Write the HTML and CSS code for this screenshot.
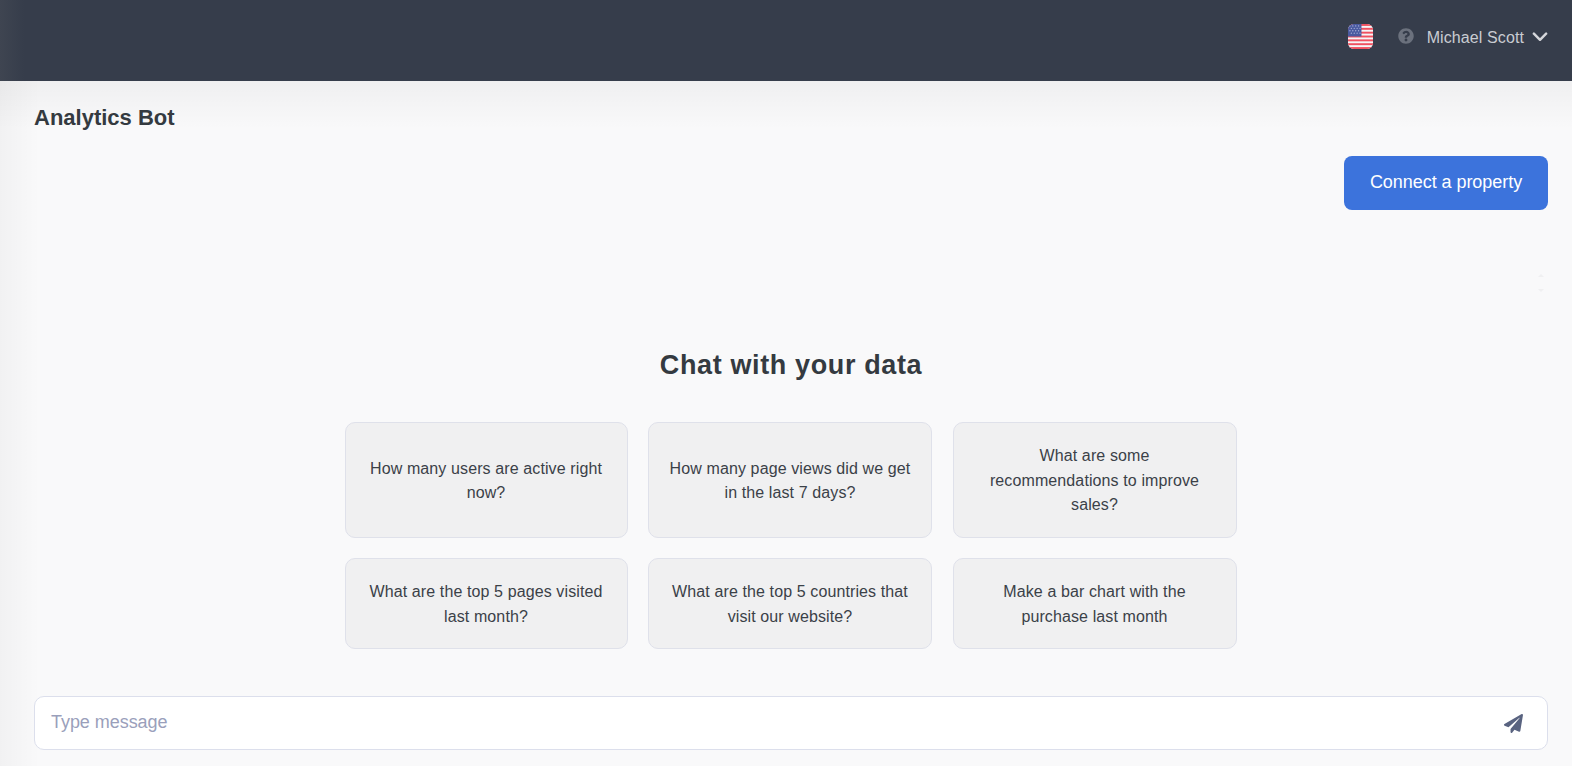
FILE: index.html
```html
<!DOCTYPE html>
<html lang="en">
<head>
<meta charset="utf-8">
<title>Analytics Bot</title>
<link rel="stylesheet" href="styles.css">
</head>
<body>
<header class="topbar">
  <svg class="flag" viewBox="0 0 26 26" aria-hidden="true">
    <defs><clipPath id="flagclip"><rect width="26" height="26" rx="6"/></clipPath></defs>
    <g clip-path="url(#flagclip)">
      <rect width="26" height="26" fill="#f5f5f7"/>
      <rect y="0" width="26" height="2" fill="#f0505f"/>
      <rect y="4" width="26" height="2" fill="#f0505f"/>
      <rect y="8" width="26" height="2" fill="#f0505f"/>
      <rect y="12" width="26" height="2" fill="#f0505f"/>
      <rect y="16" width="26" height="2" fill="#f0505f"/>
      <rect y="20" width="26" height="2" fill="#f0505f"/>
      <rect y="24" width="26" height="2" fill="#f0505f"/>
      <rect width="14" height="13" fill="#4a5aa0"/>
      <g fill="#aab2d8">
        <circle cx="2" cy="2" r=".7"/><circle cx="5" cy="2" r=".7"/><circle cx="8" cy="2" r=".7"/><circle cx="11" cy="2" r=".7"/>
        <circle cx="3.5" cy="4.5" r=".7"/><circle cx="6.5" cy="4.5" r=".7"/><circle cx="9.5" cy="4.5" r=".7"/><circle cx="12.5" cy="4.5" r=".7"/>
        <circle cx="2" cy="7" r=".7"/><circle cx="5" cy="7" r=".7"/><circle cx="8" cy="7" r=".7"/><circle cx="11" cy="7" r=".7"/>
        <circle cx="3.5" cy="9.5" r=".7"/><circle cx="6.5" cy="9.5" r=".7"/><circle cx="9.5" cy="9.5" r=".7"/><circle cx="12.5" cy="9.5" r=".7"/>
      </g>
    </g>
  </svg>
  <svg class="help" viewBox="0 0 512 512" aria-hidden="true"><path fill="currentColor" d="M504 256c0 136.997-111.043 248-248 248S8 392.997 8 256C8 119.083 119.043 8 256 8s248 111.083 248 248zM262.655 90c-54.497 0-89.255 22.957-116.549 63.758-3.536 5.286-2.353 12.415 2.715 16.258l34.699 26.31c5.205 3.947 12.621 3.008 16.665-2.122 17.864-22.658 30.113-35.797 57.303-35.797 20.429 0 45.698 13.148 45.698 32.958 0 14.976-12.363 22.667-32.534 33.976C247.128 238.528 216 254.941 216 296v4c0 6.627 5.373 12 12 12h56c6.627 0 12-5.373 12-12v-1.333c0-28.462 83.186-29.647 83.186-106.667 0-58.002-60.165-102-116.531-102zM256 338c-25.365 0-46 20.635-46 46 0 25.364 20.635 46 46 46s46-20.636 46-46c0-25.365-20.635-46-46-46z"/></svg>
  <span class="user">Michael Scott</span>
  <svg class="chevron" viewBox="0 0 14 9" aria-hidden="true"><path d="M1.500 1.500 7 7l5.500-5.500" fill="none" stroke="currentColor" stroke-width="2.200" stroke-linecap="round" stroke-linejoin="round"/></svg>
</header>
<main class="content">
  <h1 class="page-title">Analytics Bot</h1>
  <div class="actions"><button class="connect" type="button">Connect a property</button></div>
  <div class="scroll-arrows" aria-hidden="true"><span class="arrow-up"></span><span class="arrow-down"></span></div>
  <section class="chat">
    <h2 class="chat-title">Chat with your data</h2>
    <div class="prompts">
      <div class="prompt">How many users are active right now?</div>
      <div class="prompt">How many page views did we get in the last 7 days?</div>
      <div class="prompt prompt-narrow">What are some recommendations to improve sales?</div>
      <div class="prompt">What are the top 5 pages visited last month?</div>
      <div class="prompt">What are the top 5 countries that visit our website?</div>
      <div class="prompt">Make a bar chart with the purchase last month</div>
    </div>
  </section>
  <div class="composer">
    <span class="placeholder">Type message</span>
    <svg class="send" viewBox="0 0 512 512" aria-hidden="true"><path fill="currentColor" d="M476 3.2L12.5 270.6c-18.1 10.4-15.8 35.6 2.2 43.2L121 358.4l287.3-253.2c5.5-4.900 13.3 2.600 8.600 8.300L176 407v80.500c0 23.600 28.500 32.900 42.500 15.800L282 426l124.600 52.200c14.200 6 30.400-2.900 33-18.200l72-432C515 7.800 493.300-6.800 476 3.200z"/></svg>
  </div>
</main>
</body>
</html>
```
FILE: styles.css
```css
* { box-sizing: border-box; }
html, body { margin: 0; height: 100%; }
body {
  width: 1572px;
  height: 766px;
  overflow: hidden;
  font-family: "Liberation Sans", Arial, sans-serif;
  color: #343a40;
  background: #f9f9fa;
  display: flex;
  flex-direction: column;
}
.topbar {
  flex: 0 0 81px;
  display: flex;
  align-items: center;
  justify-content: flex-end;
  padding: 0 24px 7px 0;
  background: #363d4b;
  background-image: linear-gradient(90deg, #3f4551 0, #363d4b 24px);
}
.flag { width: 25px; height: 25px; margin-right: 25px; position: relative; top: -1px; }
.help { width: 16px; height: 16px; color: #6b717d; margin: 0 13px 2px 0; }
.user { font-size: 16px; letter-spacing: .1px; padding-top: 2px; color: #c9ccd2; margin-right: 8px; }
.chevron { width: 16px; height: 10px; color: #d5d7db; }
.content {
  position: relative;
  flex: 1;
  display: flex;
  flex-direction: column;
  padding: 0 24px 16px 34px;
  background-image:
    linear-gradient(180deg, rgba(0, 0, 0, .04) 0, rgba(0, 0, 0, 0) 48px),
    linear-gradient(90deg, rgba(0, 0, 0, .03) 0, rgba(0, 0, 0, 0) 40px);
  background-repeat: no-repeat;
}
.page-title {
  margin: 25px 0 0;
  font-size: 22px;
  line-height: 23px;
  font-weight: 700;
  color: #343a40;
}
.actions { display: flex; justify-content: flex-end; margin-top: 27px; }
.connect {
  width: 204px;
  height: 54px;
  padding: 0 0 1px;
  border: 0;
  border-radius: 8px;
  background: #3c73dc;
  color: #fff;
  font: 18px "Liberation Sans", Arial, sans-serif;
  letter-spacing: -.05px;
}
.scroll-arrows {
  position: absolute;
  left: 1538px;
  top: 193px;
  display: flex;
  flex-direction: column;
  gap: 12px;
}
.arrow-up, .arrow-down { width: 0; height: 0; border: 3px solid transparent; }
.arrow-up { border-top: 0; border-bottom: 3px solid #f0f0f1; }
.arrow-down { border-bottom: 0; border-top: 3px solid #f0f0f1; }
.chat { flex: 1; display: flex; flex-direction: column; align-items: center; }
.chat-title {
  margin: 139px 0 0;
  font-size: 27px;
  line-height: 32px;
  font-weight: 700;
  letter-spacing: .62px;
  color: #343a40;
}
.prompts {
  margin: 41px 0 0 -1px;
  display: grid;
  grid-template-columns: 283px 284px 284px;
  grid-template-rows: 116px 91px;
  gap: 20px 20.500px;
}
.prompt {
  display: flex;
  align-items: center;
  justify-content: center;
  padding: 2px 18px 0;
  text-align: center;
  font-size: 16px;
  letter-spacing: .11px;
  line-height: 24.500px;
  color: #3b4148;
  background: #f0f0f1;
  border: 1px solid #dfe1ea;
  border-radius: 10px;
}
.prompt-narrow { padding: 2px 30px 0; }
.composer {
  height: 54px;
  flex: 0 0 54px;
  display: flex;
  align-items: center;
  justify-content: space-between;
  padding: 0 24px 2px 16px;
  background: #fff;
  border: 1px solid #dcdfec;
  border-radius: 10px;
}
.placeholder { font-size: 18px; letter-spacing: -.05px; color: #9a9fbb; }
.send { width: 19px; height: 19px; color: #596380; position: relative; top: 1px; }
```
